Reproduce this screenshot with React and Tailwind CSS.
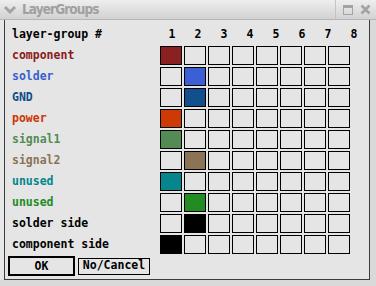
const rows = [
  { name: 'component', color: 'text-[#8b1a1a]', col: 0, fill: 'bg-[#8b2020]' },
  { name: 'solder', color: 'text-[#3a5fcd]', col: 1, fill: 'bg-[#3b5fd4]' },
  { name: 'GND', color: 'text-[#104e8b]', col: 1, fill: 'bg-[#124f8c]' },
  { name: 'power', color: 'text-[#cd3700]', col: 0, fill: 'bg-[#cd3a05]' },
  { name: 'signal1', color: 'text-[#548b54]', col: 0, fill: 'bg-[#548b54]' },
  { name: 'signal2', color: 'text-[#8b7355]', col: 1, fill: 'bg-[#8b7355]' },
  { name: 'unused', color: 'text-[#00868b]', col: 0, fill: 'bg-[#05868c]' },
  { name: 'unused', color: 'text-[#228b22]', col: 1, fill: 'bg-[#228b22]' },
  { name: 'solder side', color: 'text-black', col: 1, fill: 'bg-black' },
  { name: 'component side', color: 'text-black', col: 0, fill: 'bg-black' },
];

const cols = [1, 2, 3, 4, 5, 6, 7, 8];

function TitleBar() {
  return (
    <div className="h-[20px] flex items-center bg-gradient-to-b from-[#eeeeee] to-[#d2d2d2] border-b border-[#b5b5b5]">
      <svg width="14" height="12" viewBox="0 0 14 12" className="ml-[3px] mr-[5px]">
        <path d="M2 3 L7 8 L12 3" stroke="#a3a3a3" strokeWidth="3" fill="none" />
      </svg>
      <span className="text-[13.5px] font-bold text-[#a0a0a0] font-['DejaVu_Sans_Condensed','DejaVu_Sans',sans-serif] [font-stretch:condensed] tracking-[-0.9px]">
        LayerGroups
      </span>
      <div className="ml-auto h-full flex items-center border-l border-[#c4c4c4] pl-[7px] pr-[5px] gap-[7px]">
        <svg width="10" height="10" viewBox="0 0 10 10">
          <rect x="0.5" y="0.5" width="9" height="9" fill="none" stroke="#a3a3a3" />
          <rect x="0.5" y="0.5" width="9" height="2.5" fill="#a3a3a3" />
        </svg>
        <svg width="11" height="11" viewBox="0 0 11 11">
          <path d="M1.5 1.5 L9.5 9.5 M9.5 1.5 L1.5 9.5" stroke="#a3a3a3" strokeWidth="2.6" />
        </svg>
      </div>
    </div>
  );
}

export default function App() {
  return (
    <div className="w-[376px] h-[286px] bg-[#d9d9d9] font-['DejaVu_Sans_Mono',monospace] font-bold text-[11.5px] overflow-hidden">
      <TitleBar />
      <div className="flex h-[260px]">
        <div className="w-[4px] bg-[#e8e8e8]" />
        <div className="w-[366px] bg-[#e5e5e5] border-l border-b border-r border-[#3c3c3c] flex flex-col">
          <div className="flex items-center h-[16px] mt-[7px]">
            <span className="w-[154px] pl-[7px] text-black">layer-group #</span>
            <div className="flex">
              {cols.map((c) => (
                <span key={c} className="w-[26px] text-center text-black">{c}</span>
              ))}
            </div>
          </div>
          <div className="flex flex-col gap-[2px] mt-[3px]">
            {rows.map((r, i) => (
              <div key={i} className="flex items-center h-[19px]">
                <span className={`w-[155px] pl-[7px] ${r.color}`}>{r.name}</span>
                <div className="flex gap-[2px]">
                  {cols.map((c, j) => (
                    <div
                      key={c}
                      className={`w-[22px] h-[19px] border border-black ${j === r.col ? r.fill : 'bg-[#e5e5e5]'}`}
                    />
                  ))}
                </div>
              </div>
            ))}
          </div>
          <div className="flex items-center gap-[3px] pl-[3px] mt-[2px]">
            <button className="w-[67px] h-[20px] border-2 border-black bg-[#e5e5e5] text-black">OK</button>
            <button className="w-[72px] h-[17px] border border-black bg-[#e5e5e5] text-black leading-none">No/Cancel</button>
          </div>
        </div>
      </div>
    </div>
  );
}
